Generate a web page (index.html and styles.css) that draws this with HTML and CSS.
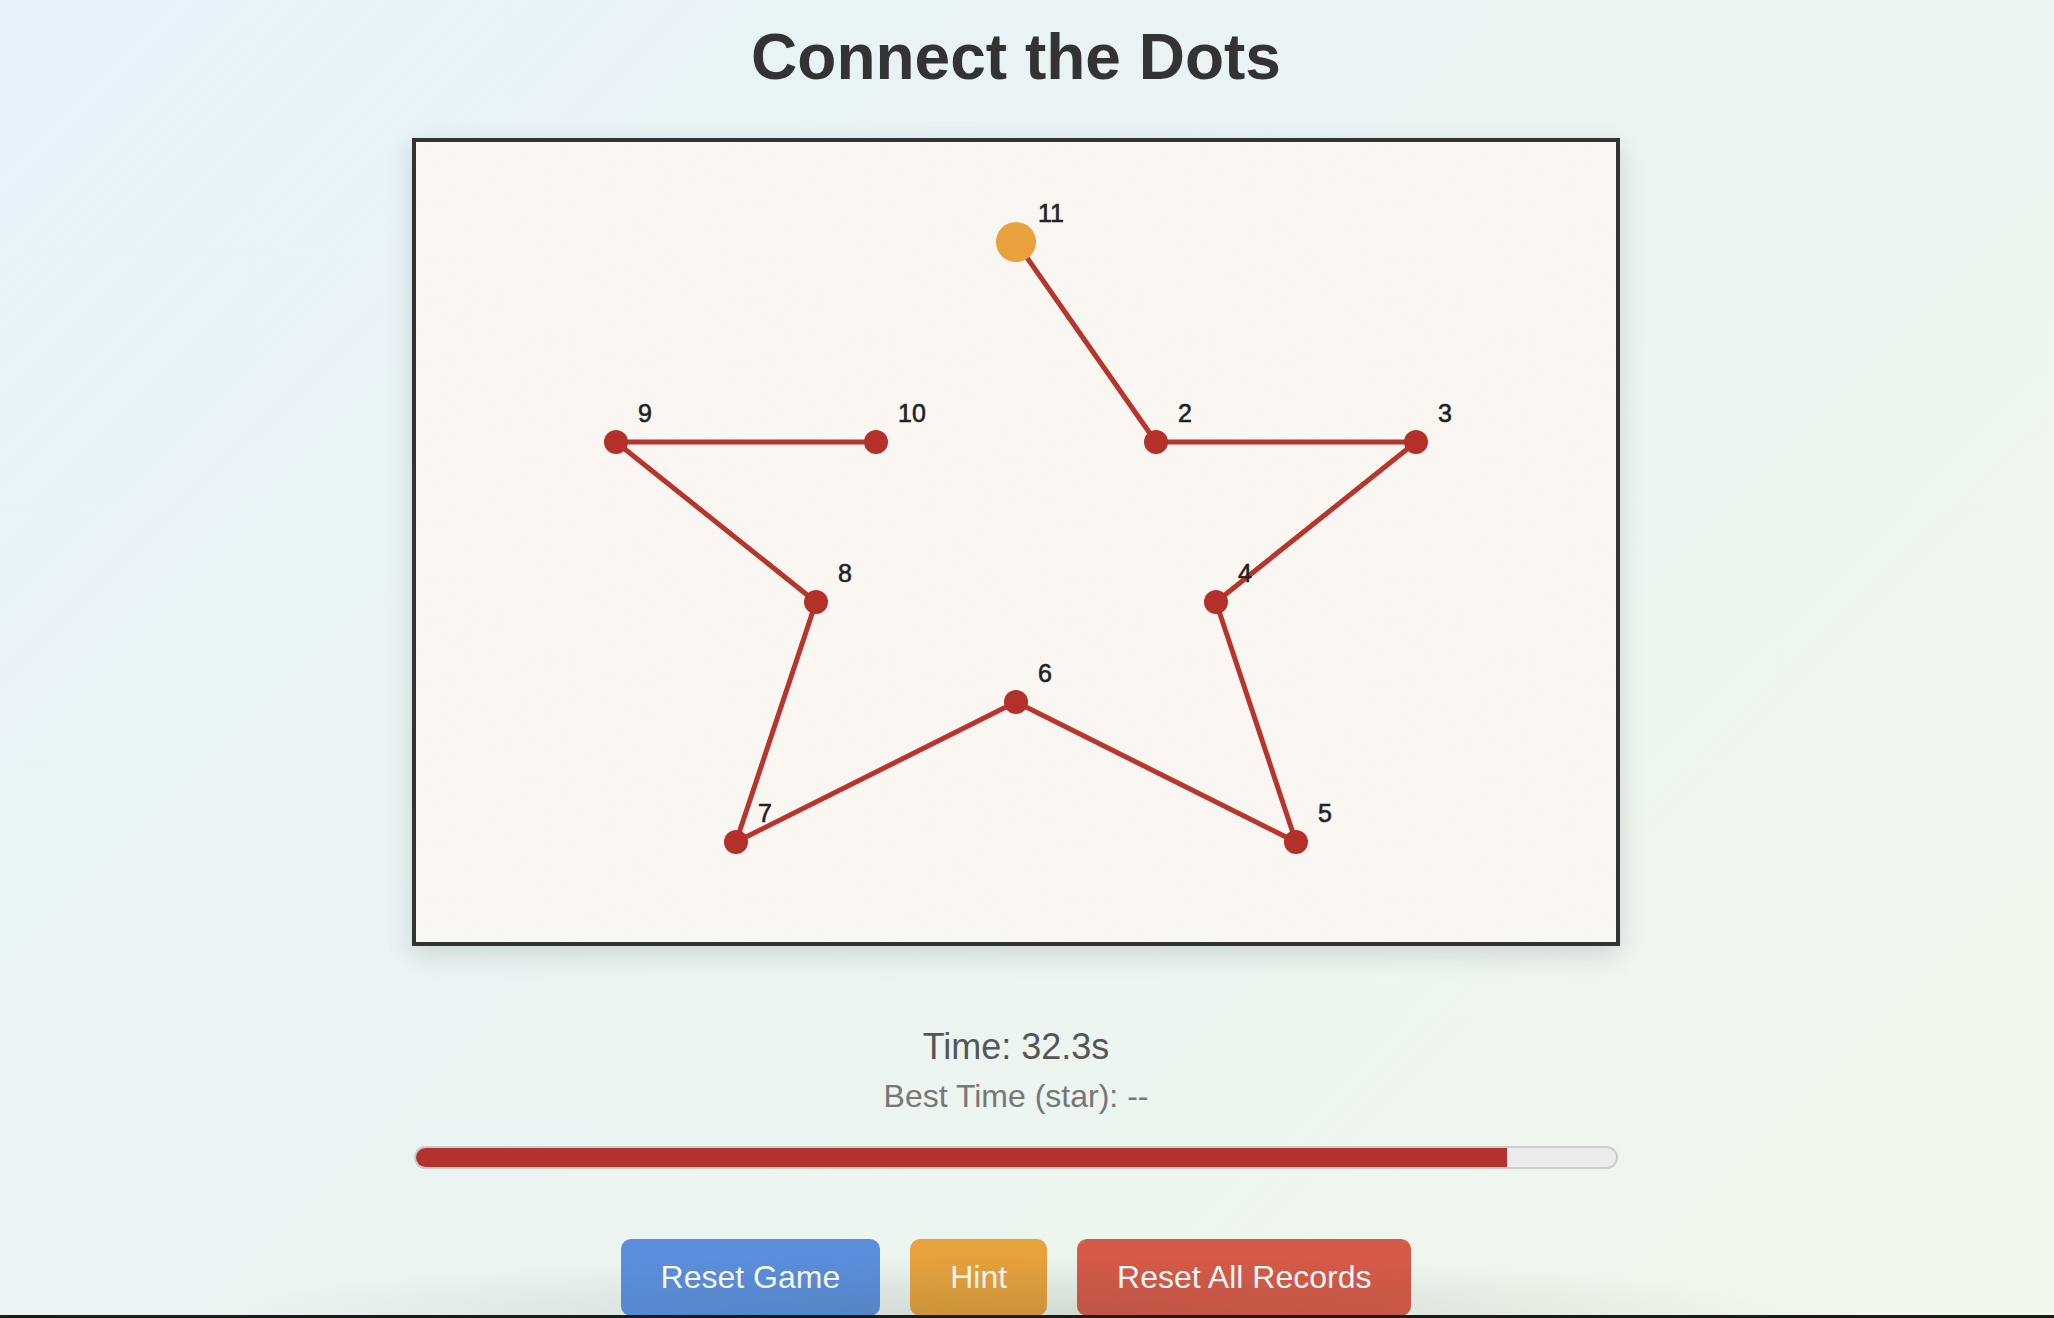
FILE: index.html
```html
<!DOCTYPE html>
<html lang="en">
<head>
<meta charset="utf-8">
<title>Connect the Dots</title>
<link rel="stylesheet" href="styles.css">
</head>
<body>
<main class="page">
  <h1 class="title">Connect the Dots</h1>
  <div class="board">
    <svg class="board-svg" viewBox="0 0 1200 800" width="1200" height="800" xmlns="http://www.w3.org/2000/svg">
      <defs>
        <filter id="paper" x="0" y="0" width="100%" height="100%">
          <feTurbulence type="fractalNoise" baseFrequency="0.8" numOctaves="2" seed="3"/>
          <feColorMatrix type="saturate" values="0"/>
        </filter>
      </defs>
      <rect class="paper-noise" x="0" y="0" width="1200" height="800" filter="url(#paper)"/>
      <polyline class="path-line" points="600,100 740,300 1000,300 800,460 880,700 600,560 320,700 400,460 200,300 460,300"/>
      <g class="dots">
        <circle cx="740" cy="300" r="12"/>
        <circle cx="1000" cy="300" r="12"/>
        <circle cx="800" cy="460" r="12"/>
        <circle cx="880" cy="700" r="12"/>
        <circle cx="600" cy="560" r="12"/>
        <circle cx="320" cy="700" r="12"/>
        <circle cx="400" cy="460" r="12"/>
        <circle cx="200" cy="300" r="12"/>
        <circle cx="460" cy="300" r="12"/>
      </g>
      <circle class="dot-next" cx="600" cy="100" r="20"/>
      <g class="labels">
        <text x="622" y="80">11</text>
        <text x="762" y="280">2</text>
        <text x="1022" y="280">3</text>
        <text x="822" y="440">4</text>
        <text x="902" y="680">5</text>
        <text x="622" y="540">6</text>
        <text x="342" y="680">7</text>
        <text x="422" y="440">8</text>
        <text x="222" y="280">9</text>
        <text x="482" y="280">10</text>
      </g>
    </svg>
  </div>
  <div class="stats">
    <div class="time">Time: 32.3s</div>
    <div class="best">Best Time (star): --</div>
  </div>
  <div class="progress">
    <div class="progress-fill" style="width: 90.91%"></div>
  </div>
  <div class="controls">
    <button class="btn btn-blue" type="button">Reset Game</button>
    <button class="btn btn-orange" type="button">Hint</button>
    <button class="btn btn-red" type="button">Reset All Records</button>
  </div>
</main>
<div class="bottom-shade"></div>
<div class="screen-edge"></div>
</body>
</html>
```
FILE: styles.css
```css
html, body {
  margin: 0;
  height: 100%;
}

body {
  font-family: "Liberation Sans", Arial, sans-serif;
  background: linear-gradient(135deg, #e6f2fa 0%, #ebf4f2 50%, #f1f7eb 100%);
  overflow: hidden;
}

.page {
  padding: 20px 22px 0 0;
  display: flex;
  flex-direction: column;
  align-items: center;
}

.title {
  margin: 0;
  font-size: 64px;
  line-height: 74px;
  font-weight: bold;
  color: #333;
  text-align: center;
}

.board {
  margin-top: 44px;
  width: 1200px;
  height: 800px;
  border: 4px solid #333;
  background: #fbf8f3;
  box-shadow: 0 8px 24px rgba(0, 0, 0, 0.13);
}

.board-svg {
  display: block;
}

.paper-noise {
  opacity: 0.035;
}

.path-line {
  fill: none;
  stroke: #b6352d;
  stroke-width: 5;
  stroke-linejoin: round;
  stroke-linecap: round;
}

.dots circle {
  fill: #b3302b;
}

.dot-next {
  fill: #e9a23b;
}

.labels text {
  font-family: "Liberation Sans", Arial, sans-serif;
  font-size: 25px;
  fill: #222;
  stroke: #222;
  stroke-width: 0.6;
}

.stats {
  margin-top: 80px;
  display: flex;
  flex-direction: column;
  align-items: center;
  gap: 10px;
}

.time {
  font-size: 36px;
  color: #555;
}

.best {
  font-size: 32px;
  color: #777;
}

.progress {
  margin-top: 31px;
  box-sizing: border-box;
  width: 1204px;
  height: 23px;
  border: 2px solid #cccccc;
  border-radius: 12px;
  background: #ececec;
  overflow: hidden;
}

.progress-fill {
  height: 100%;
  background: #b3322d;
}

.controls {
  margin-top: 70px;
  display: flex;
  gap: 30px;
}

.btn {
  font-family: "Liberation Sans", Arial, sans-serif;
  font-size: 32px;
  line-height: normal;
  color: #fff;
  border: none;
  border-radius: 10px;
  padding: 20px 40px;
  cursor: pointer;
}

.btn-blue {
  background: #5b8fdc;
}

.btn-orange {
  background: #e7a23b;
}

.btn-red {
  background: #d65a48;
}

.bottom-shade {
  position: fixed;
  left: 0;
  right: 0;
  bottom: 3px;
  height: 70px;
  pointer-events: none;
  background: radial-gradient(ellipse 800px 60px at 1015px 100%, rgba(60, 70, 60, 0.16), rgba(60, 70, 60, 0) 100%);
}

.screen-edge {
  position: fixed;
  left: 0;
  right: 0;
  bottom: 0;
  height: 3px;
  background: #1b1b17;
}
```
